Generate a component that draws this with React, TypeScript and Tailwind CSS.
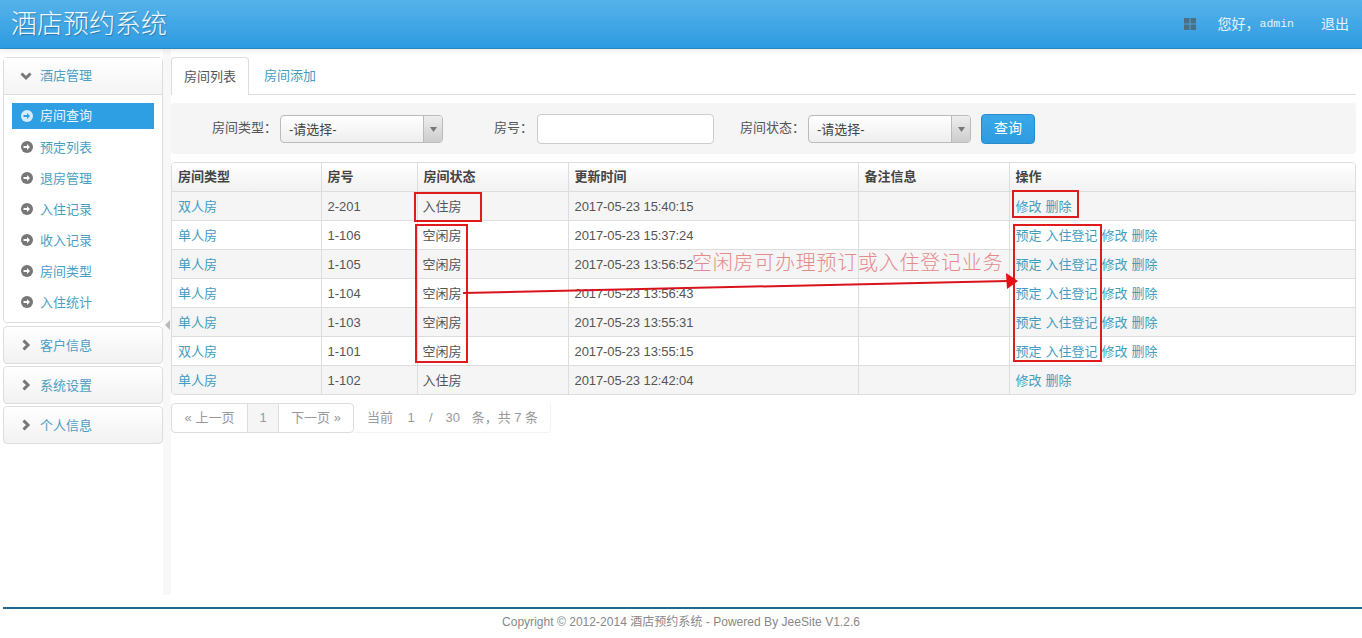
import React from "react";

const rows = [
  { type: "双人房", no: "2-201", status: "入住房", time: "2017-05-23 15:40:15", free: false },
  { type: "单人房", no: "1-106", status: "空闲房", time: "2017-05-23 15:37:24", free: true },
  { type: "单人房", no: "1-105", status: "空闲房", time: "2017-05-23 13:56:52", free: true },
  { type: "单人房", no: "1-104", status: "空闲房", time: "2017-05-23 13:56:43", free: true },
  { type: "单人房", no: "1-103", status: "空闲房", time: "2017-05-23 13:55:31", free: true },
  { type: "双人房", no: "1-101", status: "空闲房", time: "2017-05-23 13:55:15", free: true },
  { type: "单人房", no: "1-102", status: "入住房", time: "2017-05-23 12:42:04", free: false },
];

const menu = ["房间查询", "预定列表", "退房管理", "入住记录", "收入记录", "房间类型", "入住统计"];

function ArrowCircle({ active }: { active?: boolean }) {
  return (
    <svg width="12" height="12" viewBox="0 0 12 12" className="shrink-0">
      <circle cx="6" cy="6" r="6" fill={active ? "#d5ecfa" : "#777"} />
      <path d="M2.5 5H6V3l3 3-3 3V7H2.5z" fill={active ? "#2e9fe3" : "#fff"} />
    </svg>
  );
}

function Chevron({ down }: { down?: boolean }) {
  return (
    <svg width="12" height="12" viewBox="0 0 12 12" className="shrink-0">
      <path d={down ? "M1.5 3.5L6 8l4.5-4.5" : "M3.5 1.5L8 6l-4.5 4.5"} fill="none" stroke="#777" strokeWidth="3" />
    </svg>
  );
}

function FakeSelect() {
  return (
    <div className="mt-[1px] flex h-[28px] w-[163px] overflow-hidden rounded-[4px] border border-[#bbb] bg-gradient-to-b from-white to-[#eee]">
      <span className="flex-1 pl-[8px] text-[13px] leading-[27px] text-[#444]">-请选择-</span>
      <span className="flex w-[19px] items-center justify-center border-l border-[#bbb] bg-gradient-to-b from-[#eee] to-[#ccc]">
        <svg width="7" height="5" viewBox="0 0 7 5">
          <path d="M0 0h7L3.5 5z" fill="#777" />
        </svg>
      </span>
    </div>
  );
}

function Sidebar() {
  return (
    <aside className="flex w-[160px] shrink-0 flex-col gap-[2px] pt-[8px]">
      <div className="mb-[1px] rounded-[4px] border border-[#ddd]">
        <div className="flex h-[37px] items-center gap-[8px] border-b border-[#ddd] bg-gradient-to-b from-white to-[#f4f4f4] pl-[16px] text-[13px] text-[#4a9fc4]">
          <Chevron down />
          <span>酒店管理</span>
        </div>
        <ul className="flex flex-col gap-[5px] pt-[8px] pb-[7px]">
          {menu.map((m, i) => (
            <li
              key={m}
              className={
                i === 0
                  ? "mx-[8px] flex h-[26px] items-center gap-[7px] bg-[#2e9fe3] pl-[9px] text-[13px] text-[#eaf6fd]"
                  : "mx-[8px] flex h-[26px] items-center gap-[7px] pl-[9px] text-[13px] text-[#4a9fc4]"
              }
            >
              <ArrowCircle active={i === 0} />
              <span className={i === 0 ? "" : "pt-[1px]"}>{m}</span>
            </li>
          ))}
        </ul>
      </div>
      {["客户信息", "系统设置", "个人信息"].map((g) => (
        <div
          key={g}
          className="flex h-[38px] items-center gap-[8px] rounded-[4px] border border-[#ddd] bg-gradient-to-b from-white to-[#f2f2f2] pl-[16px] text-[13px] text-[#4a9fc4]"
        >
          <Chevron />
          <span className="pt-[1px]">{g}</span>
        </div>
      ))}
    </aside>
  );
}

function RoomTable() {
  const th = "border-l border-[#ddd] pl-[6px] text-left font-bold text-[#444]";
  const td = "border-l border-t border-[#ddd] pt-[2px] pl-[5px] font-normal text-[#555]";
  return (
    <div className="mt-[8px] overflow-hidden rounded-[4px] border border-[#ddd]">
      <table className="w-full table-fixed border-collapse text-[13px]">
        <colgroup>
          <col className="w-[149px]" />
          <col className="w-[96px]" />
          <col className="w-[151px]" />
          <col className="w-[290px]" />
          <col className="w-[151px]" />
          <col />
        </colgroup>
        <thead>
          <tr className="h-[28px] bg-gradient-to-b from-white to-[#f2f2f2]">
            <th className="pl-[6px] text-left font-bold text-[#444]">房间类型</th>
            <th className={th}>房号</th>
            <th className={th}>房间状态</th>
            <th className={th}>更新时间</th>
            <th className={th}>备注信息</th>
            <th className={th}>操作</th>
          </tr>
        </thead>
        <tbody>
          {rows.map((r, i) => (
            <tr key={r.no} className={i % 2 === 0 ? "h-[29px] bg-[#f5f5f5]" : "h-[29px] bg-white"}>
              <td className="border-t border-[#ddd] pt-[2px] pl-[6px] text-[#3f9dc0]">{r.type}</td>
              <td className={td + " pl-[6px]"}>{r.no}</td>
              <td className={td}>{r.status}</td>
              <td className={td + " pl-[6px] tracking-[-0.1px]"}>{r.time}</td>
              <td className={td}></td>
              <td className="border-t border-l border-[#ddd] pt-[2px] pl-[6px]">
                <div className="flex gap-[4px] text-[#3f9dc0]">
                  {r.free && <span>预定</span>}
                  {r.free && <span>入住登记</span>}
                  <span>修改</span>
                  <span>删除</span>
                </div>
              </td>
            </tr>
          ))}
        </tbody>
      </table>
    </div>
  );
}

function Pager() {
  return (
    <div className="mt-[8px] flex h-[30px] text-[13px] text-[#999]">
      <div className="flex rounded-[4px] border border-[#ddd]">
        <span className="flex w-[75px] items-center justify-center">« 上一页</span>
        <span className="flex w-[32px] items-center justify-center border-x border-[#ddd] bg-[#f5f5f5]">1</span>
        <span className="flex w-[74px] items-center justify-center">下一页 »</span>
      </div>
      <div className="flex w-[197px] items-center rounded-br-[4px] border-r border-b border-[#f4f4f4] pl-[13px]">
        <span>当前</span>
        <span className="mx-[4px] w-[28px] text-center">1</span>
        <span>/</span>
        <span className="mr-[8px] ml-[9px] w-[22px] text-center">30</span>
        <span>条，共 7 条</span>
      </div>
    </div>
  );
}

function Annotations() {
  const box = "pointer-events-none absolute border-2 border-[#e01b1b]";
  return (
    <>
      <div className={box + " top-[192px] left-[414px] h-[30px] w-[68px]"} />
      <div className={box + " top-[224px] left-[415px] h-[139px] w-[53px]"} />
      <div className={box + " top-[190px] left-[1012px] h-[28px] w-[67px]"} />
      <div className={box + " top-[224px] left-[1013px] h-[138px] w-[89px]"} />
      <span className="absolute top-[249px] left-[692px] text-[20px] leading-[28px] tracking-[0.75px] font-light whitespace-nowrap text-[#e58a8a]">
        空闲房可办理预订或入住登记业务
      </span>
      <svg className="pointer-events-none absolute top-[270px] left-[460px]" width="560" height="30" viewBox="0 0 560 30">
        <path d="M3 23L548 11" stroke="#d8131b" strokeWidth="2" fill="none" />
        <path d="M546 3L558 11L547 19z" fill="#e60f14" />
      </svg>
    </>
  );
}

export default function App() {
  return (
    <div className="relative flex h-[638px] flex-col overflow-hidden bg-white font-['Liberation_Sans','Noto_Sans_CJK_SC',sans-serif]">
      <header className="z-10 flex h-[49px] shrink-0 items-center justify-between border-b border-[#2a86bd] bg-gradient-to-b from-[#55b2ea] to-[#2c9be1] pr-[13px] pl-[11px] shadow-[0_2px_5px_rgba(0,0,0,0.08)]">
        <h1 className="text-[26px] font-light text-[#eef8fe] [text-shadow:1px_1px_1px_rgba(0,0,0,0.25)]">酒店预约系统</h1>
        <div className="flex items-center text-[14px] text-[#e3f3fd]">
          <svg width="12" height="12" viewBox="0 0 12 12" className="mr-[21px]">
            <path d="M0 0h5.5v5.5H0zM6.5 0H12v5.5H6.5zM0 6.5h5.5V12H0zM6.5 6.5H12V12H6.5z" fill="#4d6f84" />
          </svg>
          <span>您好，</span>
          <span className="font-['Liberation_Mono',monospace] text-[11.5px]">admin</span>
          <span className="ml-[27px]">退出</span>
        </div>
      </header>

      <div className="flex flex-1 pl-[3px]">
        <Sidebar />
        <div className="relative mb-[12px] w-[8px] shrink-0 bg-[#f8f8f8]">
          <span className="absolute top-[271px] left-[2px] h-0 w-0 border-y-[5px] border-r-[5px] border-y-transparent border-r-[#bbb]" />
        </div>
        <main className="mr-[6px] min-w-0 flex-1 pt-[8px]">
          <div className="flex h-[38px] border-b border-[#ddd] text-[13px]">
            <div className="h-[38px] rounded-t-[4px] border border-b-0 border-[#ddd] bg-white px-[12px] leading-[37px] text-[#555]">房间列表</div>
            <div className="ml-[3px] px-[12px] leading-[37px] text-[#3f9dc0]">房间添加</div>
          </div>

          <div className="mt-[8px] flex h-[51px] items-center rounded-[4px] bg-[#f5f5f5] pl-[41px] text-[13px] text-[#555]">
            <label className="mb-[1px] w-[68px]">房间类型：</label>
            <FakeSelect />
            <label className="mb-[1px] ml-[51px] w-[43px]">房号：</label>
            <input className="h-[30px] w-[177px] rounded-[4px] border border-[#ccc] bg-white" />
            <label className="mb-[1px] ml-[26px] w-[68px]">房间状态：</label>
            <FakeSelect />
            <button className="ml-[10px] h-[30px] w-[54px] rounded-[4px] border border-[#2a8ccb] bg-gradient-to-b from-[#3aa8e8] to-[#2e9be0] text-[14px] text-white">查询</button>
          </div>

          <RoomTable />
          <Pager />
        </main>
      </div>

      <footer className="ml-[3px] h-[31px] shrink-0 border-t-2 border-[#1d6a8e] pt-[4px] pr-[3px] text-center text-[12px] tracking-[0.03px] text-[#888]">
        Copyright © 2012-2014 酒店预约系统 - Powered By JeeSite V1.2.6
      </footer>

      <Annotations />
    </div>
  );
}
